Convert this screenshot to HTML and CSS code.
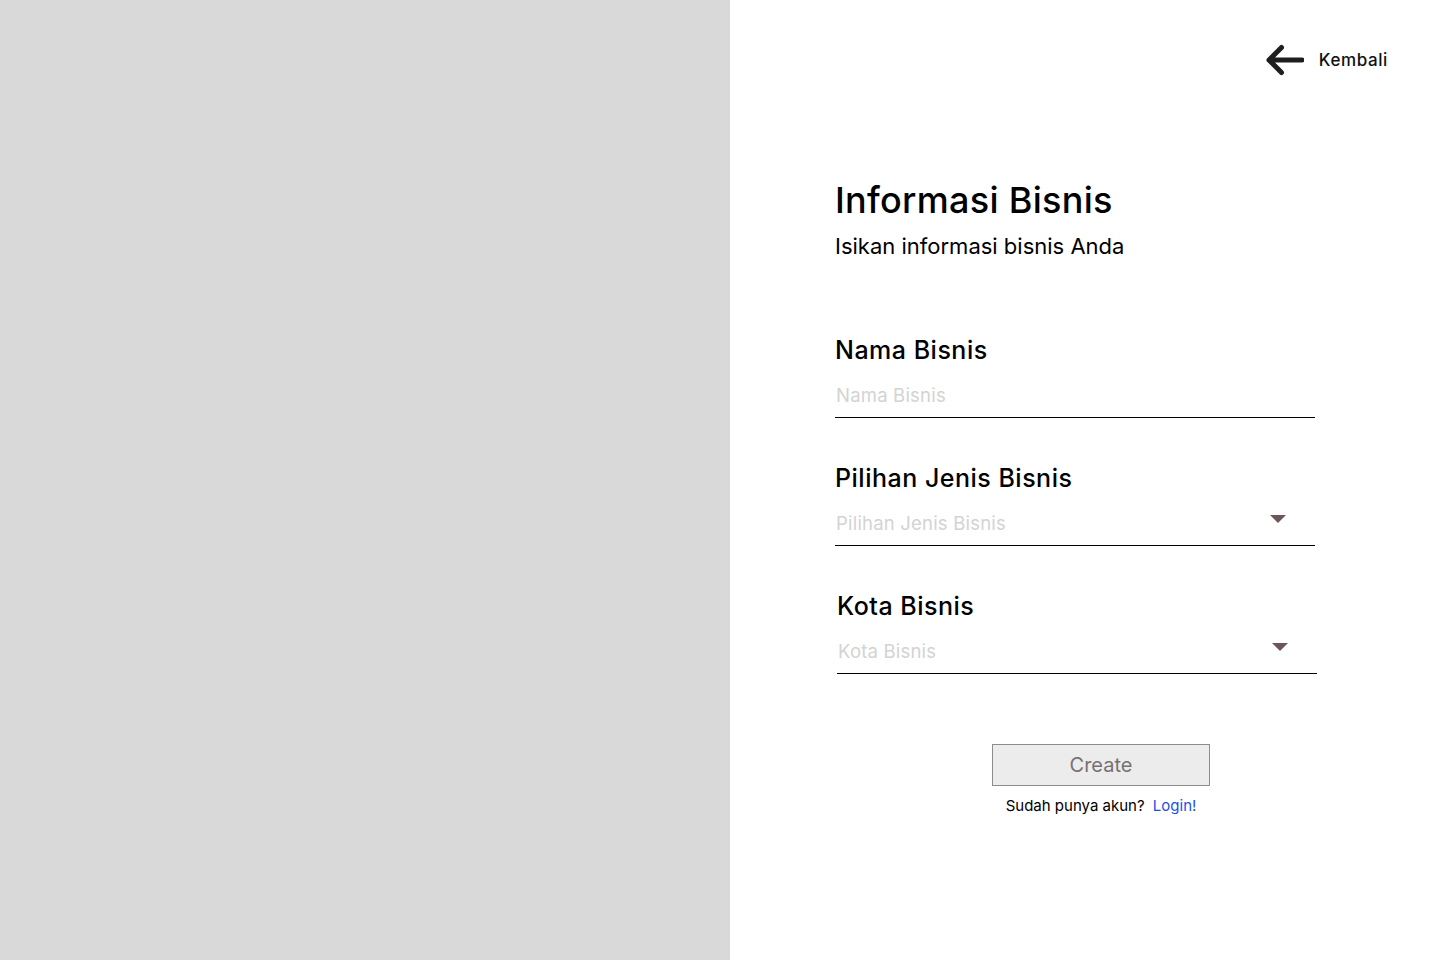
FILE: index.html
```html
<!DOCTYPE html>
<html lang="id">
<head>
<meta charset="utf-8">
<title>Informasi Bisnis</title>
<link rel="stylesheet" href="styles.css">
</head>
<body>
<div class="page">
  <aside class="side"></aside>
  <main class="main">
    <div class="topbar">
      <a class="back" href="#">
        <svg class="back-icon" width="38" height="40" viewBox="0 0 38 40" aria-hidden="true">
          <path d="M3 20 H36 M15.5 7.5 L3 20 L15.5 32.5" fill="none" stroke="#1e1e1e" stroke-width="5" stroke-linecap="round" stroke-linejoin="round"/>
        </svg>
        <span>Kembali</span>
      </a>
    </div>

    <section class="form">
      <h1 class="title">Informasi Bisnis</h1>
      <p class="subtitle">Isikan informasi bisnis Anda</p>

      <div class="field field-first">
        <div class="label">Nama Bisnis</div>
        <div class="control"><span class="placeholder">Nama Bisnis</span></div>
      </div>

      <div class="field">
        <div class="label">Pilihan Jenis Bisnis</div>
        <div class="control">
          <span class="placeholder">Pilihan Jenis Bisnis</span>
          <svg class="caret" width="16" height="8" viewBox="0 0 16 8" aria-hidden="true"><path d="M0 0 H16 L8 8 Z" fill="#6b5757"/></svg>
        </div>
      </div>

      <div class="field field-shift">
        <div class="label">Kota Bisnis</div>
        <div class="control">
          <span class="placeholder">Kota Bisnis</span>
          <svg class="caret" width="16" height="8" viewBox="0 0 16 8" aria-hidden="true"><path d="M0 0 H16 L8 8 Z" fill="#6b5757"/></svg>
        </div>
      </div>

      <div class="actions">
        <button class="create" type="button">Create</button>
        <p class="login">Sudah punya akun? <a href="#">Login!</a></p>
      </div>
    </section>
  </main>
</div>
</body>
</html>
```

FILE: styles.css
```css
* { box-sizing: border-box; }
html, body { margin: 0; padding: 0; }
body {
  background: #ffffff;
  font-family: Inter, "Open Sans", sans-serif;
  color: #000;
}
.page {
  display: flex;
  width: 1440px;
  height: 960px;
}
.side {
  width: 730px;
  flex: 0 0 730px;
  background: #d9d9d9;
}
.main {
  flex: 1;
  padding: 40px 52px 0 105px;
}
.topbar {
  display: flex;
  justify-content: flex-end;
  height: 40px;
}
.back {
  display: flex;
  align-items: center;
  gap: 15px;
  text-decoration: none;
  color: #111;
  font-size: 17px;
  letter-spacing: 0.6px;
  font-weight: 500;
}
.back-icon { display: block; }

.form { width: 480px; }
.title {
  margin: 98px 0 0;
  font-size: 36px;
  line-height: 44px;
  letter-spacing: 0.3px;
  font-weight: 500;
}
.subtitle {
  margin: 10px 0 0;
  font-size: 22px;
  line-height: 28px;
  font-weight: 400;
}
.field { margin-top: 45px; }
.field-first { margin-top: 75px; }
.field-shift { margin-left: 2px; margin-right: -2px; }
.label {
  font-size: 25px;
  line-height: 30px;
  letter-spacing: 0.5px;
  font-weight: 500;
}
.control {
  margin-top: 18px;
  height: 35px;
  padding: 0 29px 10px 1px;
  border-bottom: 1px solid #000;
  display: flex;
  align-items: flex-start;
  justify-content: space-between;
}
.placeholder {
  font-size: 18.5px;
  line-height: 24px;
  letter-spacing: 0.2px;
  color: #d3d3d3;
}
.caret { display: block; margin-top: 4px; }

.actions {
  margin: 70px 0 0 157px;
  width: 218px;
  display: flex;
  flex-direction: column;
  align-items: center;
}
.create {
  width: 218px;
  height: 42px;
  background: #ececec;
  border: 1px solid #8c8c8c;
  font-family: Inter, "Liberation Sans", sans-serif;
  font-size: 20px;
  color: #777171;
  padding: 0;
}
.login {
  margin: 10px 0 0;
  font-family: Inter, "Liberation Sans", sans-serif;
  font-size: 15px;
  line-height: 20px;
  color: #000;
}
.login a {
  color: #1a4fe6;
  text-decoration: none;
  margin-left: 4px;
}
```
